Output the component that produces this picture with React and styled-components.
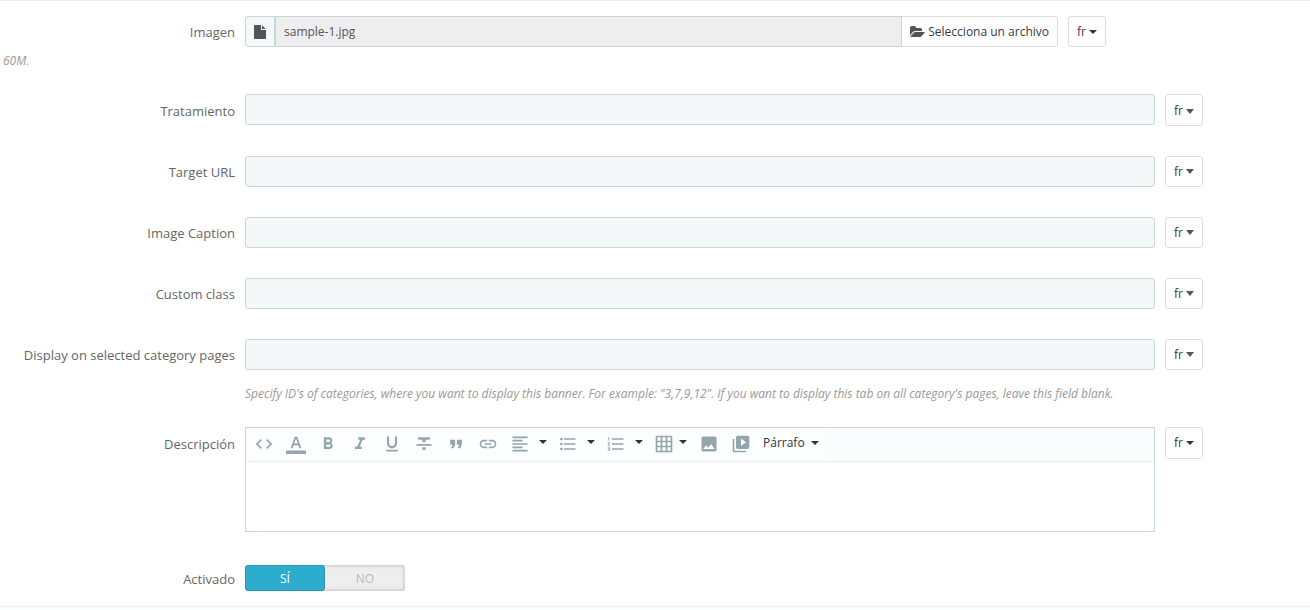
import React, { useState } from "react";
import styled, { createGlobalStyle, css } from "styled-components";
import {
  MdCode,
  MdFormatColorText,
  MdFormatBold,
  MdFormatItalic,
  MdFormatUnderlined,
  MdFormatStrikethrough,
  MdFormatQuote,
  MdLink,
  MdFormatAlignLeft,
  MdFormatListBulleted,
  MdFormatListNumbered,
  MdGridOn,
  MdImage,
  MdVideoLibrary,
} from "react-icons/md";

const GlobalStyle = createGlobalStyle`
  *, *::before, *::after { box-sizing: border-box; }
  body {
    margin: 0;
    background: #fff;
    color: #555;
    font: 12px/18px "Open Sans", "Liberation Sans", sans-serif;
  }
  button, input, textarea { font: inherit; color: inherit; margin: 0; }
`;

const Form = styled.form`
  border-top: 1px solid #eee;
  padding-top: 15px;
`;

const Row = styled.div`
  display: grid;
  grid-template-columns: 235px minmax(0, 1fr) 38px;
  column-gap: 10px;
  align-items: start;
  padding-right: ${(p) => (p.$narrow ? "204px" : "107px")};
  margin-bottom: ${(p) => p.$space ?? 30}px;
`;

const labelText = css`
  padding-top: ${(p) => (p.$compact ? 5 : p.$tall ? 8 : 7)}px;
  font-size: 13px;
  line-height: 18px;
  text-align: right;
  color: #666;
`;

const Label = styled.label`
  ${labelText}
`;

const LabelText = styled.span`
  ${labelText}
`;

const TextInput = styled.input`
  width: 100%;
  height: 31px;
  padding: 6px 8px;
  background: #f5f8f9;
  border: 1px solid #c7d6db;
  border-radius: 3px;
  outline: 0;
`;

const FileGroup = styled.div`
  display: flex;
  height: 31px;
`;

const Addon = styled.span`
  display: flex;
  align-items: center;
  justify-content: center;
  flex: 0 0 30px;
  background: #f5f8f9;
  border: 1px solid #c7d6db;
  border-radius: 3px 0 0 3px;
`;

const FileName = styled.input`
  flex: 1;
  min-width: 0;
  padding: 6px 8px;
  background: #eee;
  border: 1px solid #c7d6db;
  outline: 0;
`;

const PlainButton = styled.button`
  background: #fff;
  border: 1px solid #ddd;
  border-radius: 3px;
  color: #363a41;
  cursor: pointer;
`;

const FileButton = styled(PlainButton)`
  display: flex;
  align-items: center;
  gap: 3px;
  padding: 0 8px;
  border-left: 0;
  border-radius: 0 3px 3px 0;
  white-space: nowrap;
`;

const LangButton = styled(PlainButton)`
  display: flex;
  align-items: center;
  justify-content: center;
  gap: 3px;
  width: 38px;
  height: ${(p) => (p.$tall ? "32px" : "31px")};
  padding: ${(p) => (p.$tall && p.$large ? "2px 0 0" : "0")};
`;

const Caret = styled.span`
  border: solid transparent;
  border-width: ${(p) => (p.$large ? "5px 4px 0" : "4px 4px 0")};
  border-top-color: ${(p) => (p.$large ? "#555" : "#333")};
`;

const Help = styled.p`
  margin: ${(p) => (p.$far ? "15px" : "5px")} 0 0;
  padding-left: ${(p) => (p.$edge ? "3px" : "0")};
  grid-column: ${(p) => (p.$edge ? "1" : "2 / -1")};
  font-style: italic;
  color: #999;
`;

const Editor = styled.div`
  display: flex;
  flex-direction: column;
  border: 1px solid #c7d6db;
`;

const Toolbar = styled.div`
  display: flex;
  flex-wrap: wrap;
  min-height: 34px;
  padding-left: 2px;
  background: #fbfcfe;
  border-bottom: 1px solid #e5ebee;
`;

const Tool = styled.button`
  display: flex;
  align-items: center;
  width: ${(p) => p.$width ?? 32}px;
  height: 31px;
  padding: 0 0 0 6px;
  background: #fdfeff;
  border: 0;
  color: #94a5ac;
  cursor: pointer;
  > svg { flex: none; width: 20px; height: 20px; }
`;

const ToolCaret = styled(Caret)`
  margin: 0 0 4px ${(p) => (p.$near ? "5px" : "9px")};
`;

const ParagraphTool = styled(Tool)`
  gap: 6px;
  width: auto;
  padding: 0 7px 2px 6px;
  color: #333;
`;

const EditorArea = styled.textarea`
  display: block;
  width: 100%;
  height: 69px;
  padding: 8px;
  background: #fff;
  border: 0;
  outline: 0;
  resize: none;
`;

const Switch = styled.div`
  display: grid;
  grid-template-columns: 1fr 1fr;
  width: 160px;
  height: 26px;
  background: #eee;
  border-radius: 3px;
  box-shadow: inset 0 0 4px rgba(0, 0, 0, 0.25);
`;

const Option = styled.label`
  display: flex;
  align-items: center;
  justify-content: center;
  padding-top: 1px;
  font-size: 12px;
  color: #bbb;
  cursor: pointer;
  input { appearance: none; width: 0; height: 0; }
  &:has(input:checked) {
    background: #2eacce;
    border: 1px solid #2897b6;
    border-radius: 3px;
    color: #fff;
  }
`;

const Footer = styled.footer`
  height: 4px;
  margin-top: 15px;
  background: #fcfdfe;
  border-top: 1px solid #eee;
`;

const FileIcon = () => (
  <svg width="14" height="14" viewBox="0 0 1792 1792" fill="#555" aria-hidden="true">
    <path d="M1152 512v-472q22 14 36 28l408 408q14 14 28 36h-472zm-128 32q0 40 28 68t68 28h544v1056q0 40-28 68t-68 28h-1344q-40 0-68-28t-28-68v-1600q0-40 28-68t68-28h800v544z" />
  </svg>
);

const FolderIcon = () => (
  <svg width="15" height="14" viewBox="0 0 1920 1792" fill="#555" aria-hidden="true">
    <path d="M1879 952q0 31-31 66l-336 396q-43 51-120.5 86.5t-143.5 35.5h-1088q-34 0-60.5-13t-26.5-43q0-31 31-66l336-396q43-51 120.5-86.5t143.5-35.5h1088q34 0 60.5 13t26.5 43zm-343-344v160h-832q-94 0-197 47.5t-164 119.5l-337 396-5 6q0-4-.5-12.5t-.5-12.5v-960q0-92 66-158t158-66h320q92 0 158 66t66 158v32h544q92 0 158 66t66 158z" />
  </svg>
);

const TextColorIcon = () => (
  <svg viewBox="0 0 24 24" fill="currentColor" aria-hidden="true">
    <MdFormatColorText size={24} />
    <rect y="20" width="24" height="4" />
  </svg>
);

const Lang = ({ tall, large }) => (
  <LangButton type="button" $tall={tall} $large={large} aria-haspopup="menu">
    fr
    <Caret $large={large} />
  </LangButton>
);

const fields = [
  { id: "title", label: "Tratamiento", tall: true },
  { id: "url", label: "Target URL" },
  { id: "caption", label: "Image Caption" },
  { id: "class", label: "Custom class" },
  {
    id: "categories",
    label: "Display on selected category pages",
    help: `Specify ID's of categories, where you want to display this banner. For example: "3,7,9,12". If you want to display this tab on all category's pages, leave this field blank.`,
  },
];

const tools = [
  { name: "Código fuente", Icon: MdCode },
  { name: "Color de texto", Icon: TextColorIcon },
  { name: "Negrita", Icon: MdFormatBold },
  { name: "Cursiva", Icon: MdFormatItalic },
  { name: "Subrayado", Icon: MdFormatUnderlined },
  { name: "Tachado", Icon: MdFormatStrikethrough },
  { name: "Cita", Icon: MdFormatQuote },
  { name: "Enlace", Icon: MdLink },
  { name: "Alineación", Icon: MdFormatAlignLeft, width: 48, menu: true },
  { name: "Lista", Icon: MdFormatListBulleted, width: 48, menu: true },
  { name: "Lista numerada", Icon: MdFormatListNumbered, width: 48, menu: true },
  { name: "Tabla", Icon: MdGridOn, width: 45, menu: true, near: true },
  { name: "Imagen", Icon: MdImage },
  { name: "Vídeo", Icon: MdVideoLibrary },
];

export default function App() {
  const [active, setActive] = useState(true);
  return (
    <>
      <GlobalStyle />
      <Form>
        <Row $narrow $space={24}>
          <Label htmlFor="image">Imagen</Label>
          <FileGroup>
            <Addon>
              <FileIcon />
            </Addon>
            <FileName id="image" readOnly value="sample-1.jpg" />
            <FileButton type="button">
              <FolderIcon />
              Selecciona un archivo
            </FileButton>
          </FileGroup>
          <Lang />
          <Help $edge>60M.</Help>
        </Row>

        {fields.map((f) => (
          <Row key={f.id} $space={f.help ? 24 : 30}>
            <Label htmlFor={f.id} $tall={f.tall}>
              {f.label}
            </Label>
            <TextInput id={f.id} type="text" />
            <Lang large tall={f.tall} />
            {f.help && <Help $far>{f.help}</Help>}
          </Row>
        ))}

        <Row $space={33}>
          <Label htmlFor="description" $tall>
            Descripción
          </Label>
          <Editor>
            <Toolbar role="toolbar">
              {tools.map(({ name, Icon, width, menu, near }) => (
                <Tool key={name} type="button" aria-label={name} $width={width}>
                  <Icon />
                  {menu && <ToolCaret $near={near} />}
                </Tool>
              ))}
              <ParagraphTool type="button">
                Párrafo
                <Caret />
              </ParagraphTool>
            </Toolbar>
            <EditorArea id="description" />
          </Editor>
          <Lang tall />
        </Row>

        <Row $space={0}>
          <LabelText id="active-label" $compact>
            Activado
          </LabelText>
          <Switch role="radiogroup" aria-labelledby="active-label">
            <Option>
              <input type="radio" name="active" checked={active} onChange={() => setActive(true)} />
              SÍ
            </Option>
            <Option>
              <input type="radio" name="active" checked={!active} onChange={() => setActive(false)} />
              NO
            </Option>
          </Switch>
        </Row>
        <Footer />
      </Form>
    </>
  );
}
